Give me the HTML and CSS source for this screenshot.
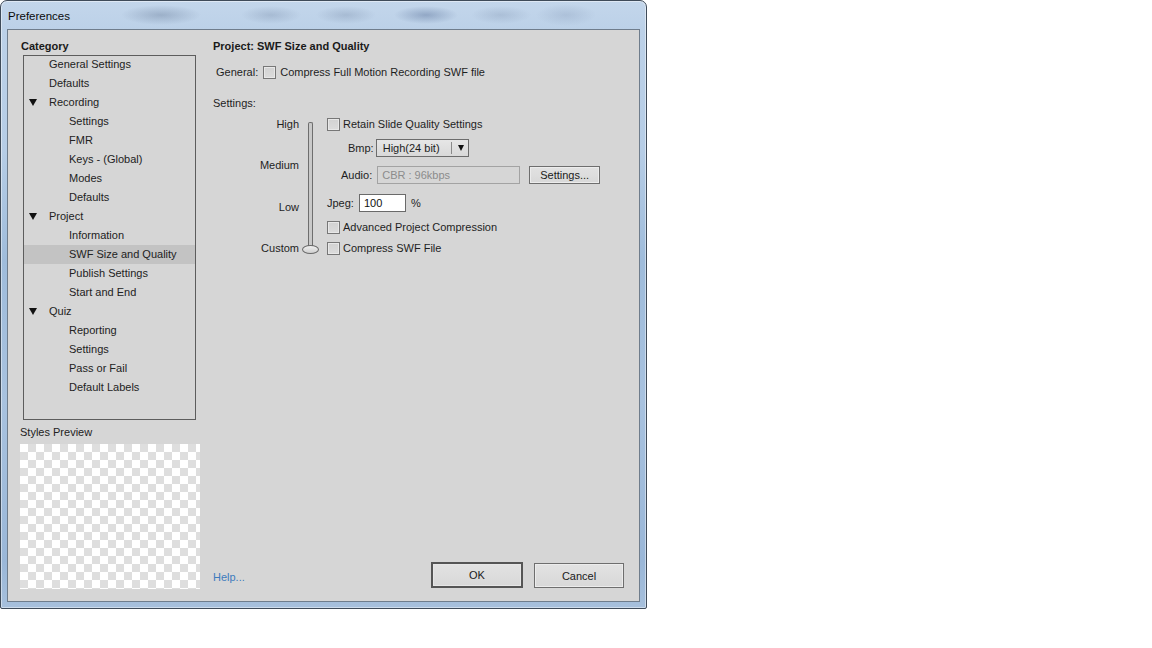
FILE: index.html
```html
<!DOCTYPE html>
<html>
<head>
<meta charset="utf-8">
<title>Preferences</title>
<link rel="stylesheet" href="styles.css">
</head>
<body>
<div class="window">
  <div class="titlebar"><span class="title">Preferences</span></div>
  <div class="panel">
    <div class="left">
      <div class="cat-title">Category</div>
      <ul class="tree">
        <li class="l1">General Settings</li>
        <li class="l1">Defaults</li>
        <li class="l1 exp"><span class="tri"></span>Recording</li>
        <li class="l2">Settings</li>
        <li class="l2">FMR</li>
        <li class="l2">Keys - (Global)</li>
        <li class="l2">Modes</li>
        <li class="l2">Defaults</li>
        <li class="l1 exp"><span class="tri"></span>Project</li>
        <li class="l2">Information</li>
        <li class="l2 sel">SWF Size and Quality</li>
        <li class="l2">Publish Settings</li>
        <li class="l2">Start and End</li>
        <li class="l1 exp"><span class="tri"></span>Quiz</li>
        <li class="l2">Reporting</li>
        <li class="l2">Settings</li>
        <li class="l2">Pass or Fail</li>
        <li class="l2">Default Labels</li>
      </ul>
      <div class="preview-title">Styles Preview</div>
      <div class="checker"></div>
    </div>
    <div class="right">
      <div class="page-title">Project: SWF Size and Quality</div>
      <div class="general-row">
        <span class="lbl">General:</span>
        <span class="cb"></span>
        <span>Compress Full Motion Recording SWF file</span>
      </div>
      <div class="settings-label">Settings:</div>
      <div class="settings-grid">
        <div class="slider-labels">
          <span>High</span>
          <span>Medium</span>
          <span>Low</span>
          <span>Custom</span>
        </div>
        <div class="slider">
          <div class="track"></div>
          <div class="thumb"></div>
        </div>
        <div class="options">
          <div class="opt r-retain"><span class="cb"></span><span>Retain Slide Quality Settings</span></div>
          <div class="opt r-bmp">
            <span class="field-lbl lbl-bmp">Bmp:</span>
            <div class="select"><span class="sel-text">High(24 bit)</span><span class="sel-sep"></span><span class="sel-arrow"></span></div>
          </div>
          <div class="opt r-audio">
            <span class="field-lbl lbl-audio">Audio:</span>
            <div class="input disabled">CBR : 96kbps</div>
            <button class="btn small">Settings...</button>
          </div>
          <div class="opt r-jpeg">
            <span class="field-lbl lbl-jpeg">Jpeg:</span>
            <div class="input jpeg">100</div>
            <span class="pct">%</span>
          </div>
          <div class="opt r-adv"><span class="cb"></span><span>Advanced Project Compression</span></div>
          <div class="opt r-swf"><span class="cb"></span><span>Compress SWF File</span></div>
        </div>
      </div>
      <div class="footer">
        <a class="help">Help...</a>
        <div class="buttons">
          <button class="btn big default">OK</button>
          <button class="btn big">Cancel</button>
        </div>
      </div>
    </div>
  </div>
</div>
</body>
</html>
```

FILE: styles.css
```css
html, body {
  margin: 0;
  padding: 0;
  background: #ffffff;
}

body {
  font-family: "Liberation Sans", Arial, sans-serif;
  font-size: 11px;
  color: #1e1e1e;
}

.window {
  width: 647px;
  height: 609px;
  box-sizing: border-box;
  border: 1px solid #3f4b59;
  border-radius: 7px 7px 2px 2px;
  padding: 0 6px 6px 6px;
  display: flex;
  flex-direction: column;
  background:
    radial-gradient(ellipse 40px 10px at 160px 14px, rgba(90,110,140,0.35), transparent),
    radial-gradient(ellipse 30px 9px at 270px 14px, rgba(110,130,160,0.3), transparent),
    radial-gradient(ellipse 30px 9px at 345px 14px, rgba(110,130,160,0.3), transparent),
    radial-gradient(ellipse 32px 9px at 425px 14px, rgba(60,85,130,0.35), transparent),
    radial-gradient(ellipse 30px 9px at 500px 14px, rgba(110,130,160,0.25), transparent),
    radial-gradient(ellipse 30px 11px at 565px 14px, rgba(130,150,180,0.3), transparent),
    linear-gradient(180deg, #c3d6eb 0px, #bcd1e8 28px, #b6cde6 150px, #9fbcdb 260px, #a8c2df 400px, #9ab7d8 560px, #a7c0dc 609px);
  box-shadow: inset 0 0 0 1px rgba(255,255,255,0.45);
}

.titlebar {
  height: 28px;
  flex: none;
  display: flex;
  align-items: center;
  padding: 1px 0 0 1px;
  box-sizing: border-box;
}

.title {
  font-size: 11.5px;
  color: #0b0b0b;
}

.panel {
  flex: 1;
  display: flex;
  border: 1px solid #6f7d8c;
  background: #d6d6d6;
  min-height: 0;
}

/* left column */
.left {
  width: 180px;
  padding: 8px 0 0 12px;
  display: flex;
  flex-direction: column;
}

.cat-title, .page-title {
  font-weight: bold;
  line-height: 16px;
  height: 16px;
  color: #1a1a1a;
}

.cat-title {
  margin-left: 1px;
}

.tree {
  list-style: none;
  margin: 1px 0 0 3px;
  padding: 0;
  width: 173px;
  height: 365px;
  box-sizing: border-box;
  border: 1px solid #5d5d5d;
}

.tree li {
  height: 19px;
  line-height: 19px;
  white-space: nowrap;
  display: flex;
  align-items: center;
  color: #222;
}

.tree li:first-child {
  margin-top: -1px;
}

.tree .l1 {
  padding-left: 25px;
}

.tree .l1.exp {
  padding-left: 5px;
}

.tree .l2 {
  padding-left: 45px;
}

.tree .sel {
  background: #c3c3c3;
}

.tri {
  width: 0;
  height: 0;
  border-left: 4px solid transparent;
  border-right: 4px solid transparent;
  border-top: 7px solid #111;
  margin-right: 12px;
}

.preview-title {
  line-height: 16px;
  margin-top: 4px;
  color: #222;
}

.checker {
  margin-top: 4px;
  width: 180px;
  height: 145px;
  background-color: #ffffff;
  background-image:
    linear-gradient(45deg, #dedede 25%, transparent 25%, transparent 75%, #dedede 75%),
    linear-gradient(45deg, #dedede 25%, transparent 25%, transparent 75%, #dedede 75%);
  background-size: 16px 16px;
  background-position: 0 0, 8px 8px;
}

/* right column */
.right {
  flex: 1;
  margin-left: 13px;
  padding: 8px 15px 13px 0;
  display: flex;
  flex-direction: column;
}

.general-row {
  margin-top: 10px;
  margin-left: 3px;
  height: 16px;
  display: flex;
  align-items: center;
  white-space: nowrap;
}

.general-row .lbl {
  margin-right: 4px;
}

.general-row .cb {
  margin: 0 4px 0 1px;
}

.cb {
  width: 13px;
  height: 13px;
  box-sizing: border-box;
  border: 1px solid #777;
  background: linear-gradient(180deg, #d2d2d2, #dcdcdc);
  box-shadow: inset 0 0 0 1px #e8e8e8;
  flex: none;
}

.settings-label {
  margin-top: 15px;
  line-height: 16px;
}

.settings-grid {
  margin-top: 1px;
  display: flex;
  height: 146px;
}

.slider-labels {
  width: 86px;
  padding-top: 2px;
  display: flex;
  flex-direction: column;
  justify-content: space-between;
  align-items: flex-end;
}

.slider-labels span {
  line-height: 20px;
}

.slider {
  width: 17px;
  margin-left: 3px;
  display: flex;
  flex-direction: column;
  align-items: center;
}

.track {
  margin-top: 10px;
  width: 5px;
  height: 127px;
  box-sizing: border-box;
  border: 1px solid #6e6e6e;
  border-bottom: none;
  border-radius: 2px 2px 0 0;
  background: #c9c9c9;
}

.thumb {
  margin-top: -4px;
  width: 17px;
  height: 9px;
  box-sizing: border-box;
  border: 1px solid #6a6a6a;
  border-radius: 50%;
  background: linear-gradient(180deg, #f0f0f0, #cfcfcf);
}

.options {
  margin-left: 8px;
  display: flex;
  flex-direction: column;
}

.opt {
  display: flex;
  align-items: center;
  white-space: nowrap;
}

.opt .cb {
  margin-right: 3px;
}

.r-retain { height: 24px; }
.r-bmp { height: 24px; padding-left: 21px; }
.r-audio { height: 30px; padding-left: 14px; }
.r-jpeg { height: 26px; }
.r-adv { height: 22px; }
.r-swf { height: 20px; }

.field-lbl {
  margin-right: 3px;
}

.lbl-bmp { margin-right: 2px; }
.lbl-audio { margin-right: 5px; }
.lbl-jpeg { margin-right: 5px; }

.select {
  width: 93px;
  height: 18px;
  box-sizing: border-box;
  border: 1px solid #6c6c6c;
  background: linear-gradient(180deg, #e6e6e6, #d9d9d9);
  display: flex;
  align-items: center;
  padding-left: 6px;
}

.sel-text {
  width: 68px;
}

.sel-sep {
  width: 1px;
  height: 12px;
  background: #8a8a8a;
}

.sel-arrow {
  margin-left: 6px;
  width: 0;
  height: 0;
  border-left: 3.5px solid transparent;
  border-right: 3.5px solid transparent;
  border-top: 6px solid #111;
}

.input {
  height: 18px;
  box-sizing: border-box;
  line-height: 16px;
  padding-left: 4px;
}

.input.disabled {
  width: 143px;
  border: 1px solid #a3a3a3;
  color: #8c8c8c;
  background: #d6d6d6;
}

.input.jpeg {
  width: 47px;
  border: 1px solid #6a6a6a;
  background: #ffffff;
  color: #111;
}

.pct {
  margin-left: 5px;
}

.btn {
  font-family: "Liberation Sans", Arial, sans-serif;
  font-size: 11px;
  color: #1a1a1a;
  background: linear-gradient(180deg, #e2e2e2, #d8d8d8);
  border: 1px solid #6e6e6e;
  box-shadow: inset 0 0 0 1px #ececec;
  padding: 0;
  margin: 0;
}

.btn.small {
  margin-left: 9px;
  width: 71px;
  height: 18px;
}

.footer {
  margin-top: auto;
  display: flex;
  align-items: flex-end;
  justify-content: space-between;
}

.help {
  color: #3d7bbd;
  line-height: 16px;
  padding-bottom: 3px;
  cursor: pointer;
}

.buttons {
  display: flex;
  align-items: flex-end;
  gap: 11px;
}

.btn.big {
  width: 90px;
  height: 25px;
}

.btn.default {
  width: 92px;
  height: 26px;
  border: 2px solid #555555;
  box-shadow: inset 0 0 0 1px #e6e6e6;
}
```
